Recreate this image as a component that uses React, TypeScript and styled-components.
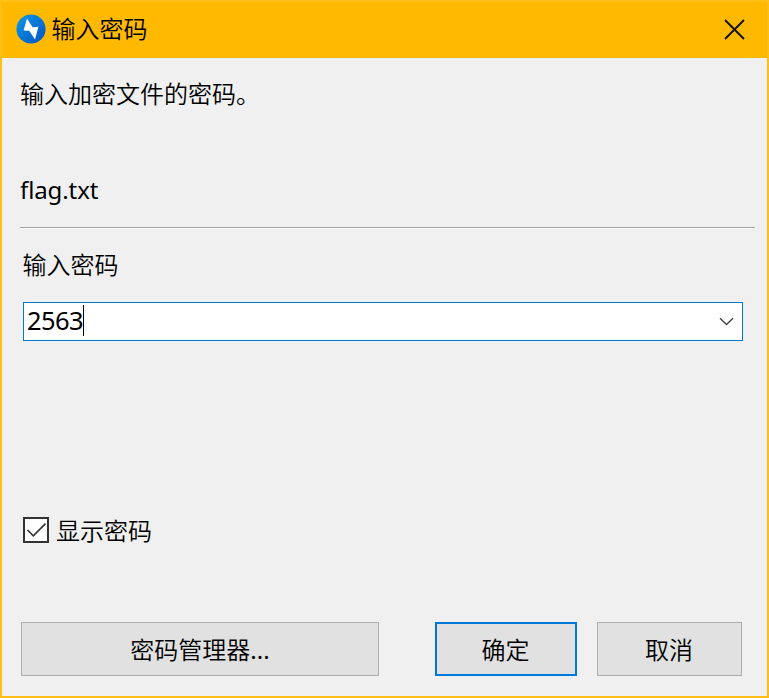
import React, { useState } from "react";
import styled, { createGlobalStyle } from "styled-components";

const GlobalStyle = createGlobalStyle`
  * { box-sizing: border-box; }
  body { margin: 0; }
`;

const Dialog = styled.div`
  width: 769px;
  height: 698px;
  display: flex;
  flex-direction: column;
  border: 2px solid #fdbf17;
  background: #f0f0f0;
  color: #000;
  font: 24px/32px "Noto Sans", "Noto Sans CJK SC", sans-serif;
  overflow: hidden;
`;

const TitleBar = styled.header`
  height: 56px;
  flex: none;
  display: flex;
  align-items: center;
  padding: 0 22px 2px 14px;
  background: #ffb900;
`;

const Title = styled.h1`
  flex: 1;
  margin: 0 0 0 5.6px;
  font-size: 24px;
  font-weight: 350;
  line-height: 32px;
`;

const CloseButton = styled.button`
  display: flex;
  padding: 0;
  border: 0;
  background: none;
`;

const Body = styled.main`
  flex: 1;
  display: flex;
  flex-direction: column;
  padding: 20px 24px 20px 18px;
`;

const Message = styled.p`
  margin: 0;
  font-weight: 350;
`;

const FileName = styled.p`
  margin: 64px 0 0;
  letter-spacing: -0.1px;
`;

const Divider = styled.hr`
  width: 735px;
  height: 2px;
  margin: 21px 0 0;
  border: 0;
  border-top: 1px solid #a0a0a0;
  background: #fff;
`;

const FieldLabel = styled.label`
  margin: 20px 0 0 2.6px;
  font-weight: 350;
`;

const ComboBox = styled.div`
  width: 720px;
  height: 39px;
  margin: 21px 0 0 3px;
  display: flex;
  align-items: center;
  justify-content: space-between;
  padding: 0 8px 0 3px;
  border: 1px solid #0078d7;
  background: #fff;
`;

const Value = styled.span`
  display: flex;
  align-items: center;
  height: 31px;
  margin-bottom: 3px;
  border-right: 1px solid #000;
  font-size: 25.5px;
  letter-spacing: -0.6px;
`;

const CheckRow = styled.label`
  display: flex;
  align-items: center;
  gap: 7px;
  margin: 172px 0 0 3px;
`;

const CheckLabel = styled.span`
  padding-top: 2px;
  font-weight: 350;
`;

const CheckBox = styled.span`
  width: 26px;
  height: 26px;
  display: flex;
  border: 2px solid #333;
  background: #fff;
`;

const Footer = styled.footer`
  display: flex;
  margin: auto 0 0 1px;
`;

const Button = styled.button<{ $width: number; $gap?: number; $primary?: boolean }>`
  width: ${(p) => p.$width}px;
  height: 54px;
  margin: 0 0 0 ${(p) => p.$gap ?? 0}px;
  padding: 1px ${(p) => (p.$gap ? 1 : 0)}px 0 0;
  border: ${(p) => (p.$primary ? "2px solid #0078d7" : "1px solid #adadad")};
  background: #e1e1e1;
  color: #000;
  font: inherit;
  font-weight: 350;
`;

const Ellipsis = styled.span`
  font-weight: 400;
`;

export default function App() {
  const [shown, setShown] = useState(true);
  return (
    <>
      <GlobalStyle />
      <Dialog role="dialog">
        <TitleBar>
          <svg width="30" height="30" viewBox="0 0 30 30">
            <defs>
              <linearGradient id="disc" x1="0" y1="0" x2="1" y2="1">
                <stop offset="0" stopColor="#0a9be6" />
                <stop offset="1" stopColor="#0552c2" />
              </linearGradient>
            </defs>
            <circle cx="15" cy="15" r="14.6" fill="url(#disc)" />
            <path d="M11 4.4 16.6 13.2 22.4 12.8 19 25.4 13.2 16.8 7.6 16.6Z" fill="#fff" />
          </svg>
          <Title>输入密码</Title>
          <CloseButton aria-label="关闭">
            <svg width="21" height="21" viewBox="0 0 21 21" fill="none" stroke="#111" strokeWidth="1.9">
              <path d="M1 1 20 20M20 1 1 20" />
            </svg>
          </CloseButton>
        </TitleBar>
        <Body>
          <Message>输入加密文件的密码。</Message>
          <FileName>flag.txt</FileName>
          <Divider />
          <FieldLabel>输入密码</FieldLabel>
          <ComboBox>
            <Value>2563</Value>
            <svg width="15" height="9" viewBox="0 0 15 9" fill="none" stroke="#444" strokeWidth="1.4">
              <path d="M1 1.2 7.5 7.5 14 1.2" />
            </svg>
          </ComboBox>
          <CheckRow onClick={() => setShown(!shown)}>
            <CheckBox>
              {shown && (
                <svg width="22" height="22" viewBox="0 0 22 22" fill="none" stroke="#333" strokeWidth="1.6">
                  <path d="M2.5 11 8.3 16.8 20.5 4.6" />
                </svg>
              )}
            </CheckBox>
            <CheckLabel>显示密码</CheckLabel>
          </CheckRow>
          <Footer>
            <Button $width={358}>密码管理器<Ellipsis>...</Ellipsis></Button>
            <Button $width={142} $gap={56} $primary>确定</Button>
            <Button $width={145} $gap={20}>取消</Button>
          </Footer>
        </Body>
      </Dialog>
    </>
  );
}
